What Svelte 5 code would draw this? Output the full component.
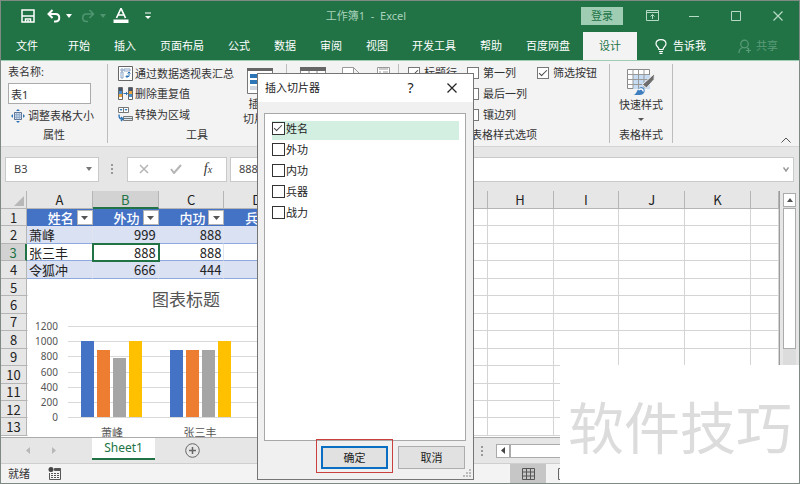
<script>
  const tabs = ['开始', '插入', '页面布局', '公式', '数据', '审阅', '视图', '开发工具', '帮助', '百度网盘'];
  const letters = ['A', 'B', 'C', 'D', 'E', 'F', 'G', 'H', 'I', 'J', 'K', ''];
  const fields = ['姓名', '外功', '内功', '兵器', '战力'];
  const data = [
    ['萧峰', 999, 888, 777, 999],
    ['张三丰', 888, 888, 888, 999],
    ['令狐冲', 666, 444, 555, 999]
  ];
  const emptyRows = [5, 6, 7, 8, 9, 10, 11, 12, 13];
  const options = [
    ['标题行', true], ['第一列', false], ['筛选按钮', true],
    ['汇总行', false], ['最后一列', false], null,
    ['镶边行', true], ['镶边列', false], null
  ];
  const colors = ['#4472c4', '#ed7d31', '#a5a5a5', '#ffc000'];
  const ticks = [1200, 1000, 800, 600, 400, 200, 0];
  const yOf = (v) => Math.round(138 - (v * 91) / 1200);
  let picked = $state([true, false, false, false, false]);
</script>

<div class="window">
  <header>
    <div class="titlebar">
      <div class="qat">
        <button class="save" aria-label="保存"><svg width="14" height="14" viewBox="0 0 14 14" fill="none" stroke="#fff" stroke-width="1.500"><path d="M1 1h12v12H1zM1.500 7h11M4.500 13V10h5v3M7 11v2"/></svg></button>
        <button class="undo" aria-label="撤销"><svg width="14" height="14" viewBox="0 0 14 14" fill="none" stroke="#fff" stroke-width="2"><path d="M5.500 1L1.500 5l4 4M2 5h6.500c5 0 5 7.500 0 7.500H7"/></svg></button>
        <button class="drop" aria-label="撤销列表"><svg width="6" height="4"><path d="M0 0h6L3 4z" fill="#fff"/></svg></button>
        <button class="redo" aria-label="恢复"><svg width="14" height="14" viewBox="0 0 14 14" fill="none" stroke="#4f9570" stroke-width="1.600"><path d="M8.500 1l4 4-4 4M12 5H5.500c-5 0-5 7.500 0 7.500H7"/></svg></button>
        <button class="drop" aria-label="恢复列表"><svg width="6" height="4"><path d="M0 0h6L3 4z" fill="#4f9570"/></svg></button>
        <button class="font" aria-label="字体颜色"><svg width="16" height="16" viewBox="0 0 16 16"><path d="M3.500 10L8 0.500 12.500 10M5 7h6" fill="none" stroke="#fff" stroke-width="1.700"/><path d="M0.500 11.500h15V15h-15z" fill="#fff"/></svg></button>
        <button class="more" aria-label="自定义快速访问工具栏"><svg width="6" height="8"><path d="M0 1h6" stroke="#fff"/><path d="M0 4h6L3 7z" fill="#fff"/></svg></button>
      </div>
      <div class="doc">工作簿1&nbsp; -&nbsp; Excel</div>
      <button class="login">登录</button>
      <div class="controls">
        <button aria-label="功能区显示选项"><svg width="13" height="11" viewBox="0 0 13 11" fill="none" stroke="#b5dac5"><path d="M.5.5h12v10H.5zM.5 2.500h12M6.500 9V4.500M4.500 6.500l2-2 2 2"/></svg></button>
        <button aria-label="最小化"><svg width="10" height="10"><path d="M0 5.500h10" stroke="#b5dac5"/></svg></button>
        <button aria-label="最大化"><svg width="10" height="10"><path d="M.5.5h9v9h-9z" fill="none" stroke="#b5dac5"/></svg></button>
        <button aria-label="关闭"><svg width="10" height="10"><path d="M.5.5l9 9M9.500.5l-9 9" stroke="#b5dac5" stroke-width="1.200"/></svg></button>
      </div>
    </div>
    <nav>
      <button class="file">文件</button>
      {#each tabs as t}<button>{t}</button>{/each}
      <button class="active">设计</button>
      <button class="tell"><svg width="12" height="15" viewBox="0 0 12 15" fill="none" stroke="#fff" stroke-width="1.200"><path d="M4 10.500C4 8 1 7.500 1 4.800 1 2.300 3.200.7 6 .7s5 1.600 5 4.100C11 7.500 8 8 8 10.500zM4 12.500h4M4.500 14.300h3"/></svg>告诉我</button>
      <button class="share"><svg width="14" height="15" viewBox="0 0 14 15" fill="none" stroke="#5b9c79" stroke-width="1.200"><circle cx="6.500" cy="5" r="3.800"/><path d="M1 14c0-3 1.500-5 4-5.500M8.500 8.500l1.500 1M10.500 9v5M8 11.500h5"/></svg>共享</button>
    </nav>
  </header>

  <section class="ribbon">
    <div class="group props">
      <div class="body">
        <label for="tname">表名称:</label>
        <input id="tname" value="表1" />
        <button><svg width="14" height="14" viewBox="0 0 14 14" fill="none" stroke="#5a6f8c"><path d="M3.500 3.500h7v7h-7z" fill="#dbe8f6"/><path d="M5.800 3.500v7M8.200 3.500v7M3.500 5.800h7M3.500 8.200h7" stroke="#8aa5c8"/><path d="M7 0l2 2H5zM7 14l2-2H5zM0 7l2-2v4zM14 7l-2-2v4z" fill="#2e75b6" stroke="none"/></svg>调整表格大小</button>
      </div>
      <h2>属性</h2>
    </div>
    <div class="group tools">
      <div class="body row">
        <div class="list">
          <button><svg width="15" height="15" viewBox="0 0 15 15" fill="none"><path d="M.5.5h14v14H.5z" fill="#fff" stroke="#666"/><path d="M3 3h2v2H3zM6 3h6v2H6zM3 6h2v6H3z" stroke="#88a3c5"/><path d="M11 6v4.500H8M9.500 9L8 10.500 9.500 12M9.500 7.500L11 6l1.500 1.500" stroke="#2e75b6"/></svg>通过数据透视表汇总</button>
          <button><svg width="15" height="13" viewBox="0 0 15 13" fill="none"><path d="M.5.5h4v12h-4zM10.500.5h4v12h-4z" fill="#fff" stroke="#666"/><path d="M1 1h3v3H1zM11 1h3v3h-3z" fill="#44546a"/><path d="M1 4h3v3H1zM11 7h3v3h-3z" fill="#4a90d0"/><path d="M1 7h3v3H1zM11 4h3v3h-3z" fill="#e8a33d"/><path d="M5.500 6.500h4M8 5l1.500 1.500L8 8" stroke="#2e75b6"/></svg>删除重复值</button>
          <button><svg width="15" height="15" viewBox="0 0 15 15" fill="none"><path d="M.5.5h10v5H.5zM5.500.5v5" fill="#fff" stroke="#777"/><path d="M1.500 2h3L3 4zM6.500 2h3L8 4z" fill="#2e75b6"/><path d="M5.500 9.500h9v4h-9zM5.500 11.500h9" fill="#dbe8f6" stroke="#777"/><path d="M1 7.500c0 4 1 4.500 3.500 4.500M3 10l2 2-2 2" stroke="#2e75b6" stroke-width="1.400"/></svg>转换为区域</button>
        </div>
        <button class="big"><svg width="26" height="26" viewBox="0 0 26 26"><path d="M.5.5h25v25H.5z" fill="#fff" stroke="#777"/><path d="M0 0h26v3H0z" fill="#666"/><path d="M3 6h20v4H3zM3 12h20v4H3z" fill="#2e75b6"/><path d="M3 18h20v4H3z" fill="#cfd6df"/></svg><span>插入<br />切片器</span></button>
      </div>
      <h2>工具</h2>
    </div>
    <div class="group ext">
      <div class="body row">
        <svg width="26" height="26" viewBox="0 0 26 26"><path d="M.5.5h25v25H.5zM9 3v23M17 3v23M0 8h26" fill="#fff" stroke="#888"/><path d="M0 0h26v4H0z" fill="#666"/></svg>
        <svg width="19" height="26" viewBox="0 0 19 26"><path d="M.5.5h11l7 7v18H.5zM11.500.5v7h7" fill="#fff" stroke="#999"/></svg>
        <svg width="13" height="15" viewBox="0 0 13 15"><path d="M.5.5h12v14H.5z" fill="#fff" stroke="#999"/><path d="M2 2h9M2 5h2M6 5h5M2 8h2M6 8h5" stroke="#999"/></svg>
      </div>
      <h2>外部表数据</h2>
    </div>
    <div class="group opts">
      <div class="body checks">
        {#each options as o}
          {#if o}<label><input type="checkbox" checked={o[1]} />{o[0]}</label>{:else}<span></span>{/if}
        {/each}
      </div>
      <h2>表格样式选项</h2>
    </div>
    <div class="group styles">
      <div class="body">
        <button class="big"><svg width="28" height="27" viewBox="0 0 28 27" fill="none"><path d="M.5.5h22v19H.5z" fill="#fff" stroke="#888"/><path d="M6 6h17v14H6z" fill="#c5dcf2"/><path d="M.5 5.500h22M.5 10.500h22M.5 15.500h22M6 .5v19M11.500.5v19M17 .5v19" stroke="#999"/><path d="M27.500 4.500l-.5 6-7.500 8.500-4-3.500z" fill="#6d6d6d" stroke="#f3f3f3"/><path d="M6 26c4.500 0 3.500-7.500 8.500-8 5 1 4 8-2 8z" fill="#3f7fbf"/><path d="M11.500 21c2-2 5-1 4.500 1.500" stroke="#fff" stroke-width="1.500"/></svg><span>快速样式</span><svg class="tri" width="6" height="4"><path d="M0 0h6L3 3z" fill="#555"/></svg></button>
      </div>
      <h2>表格样式</h2>
    </div>
    <button class="collapse" aria-label="折叠功能区"><svg width="10" height="6"><path d="M.5 5.500L5 1l4.500 4.500" fill="none" stroke="#555"/></svg></button>
  </section>

  <section class="formula">
    <div class="namebox"><input aria-label="名称框" value="B3" /><button aria-label="名称列表"><svg width="6" height="4"><path d="M0 0h6L3 4z" fill="#777"/></svg></button></div>
    <span class="grip"></span>
    <div class="fx">
      <button aria-label="取消"><svg width="10" height="10"><path d="M1 1l8 8M9 1L1 9" stroke="#b5b5b5" stroke-width="1.500"/></svg></button>
      <button aria-label="输入"><svg width="12" height="10"><path d="M1 5l3 4 7-8" fill="none" stroke="#b5b5b5" stroke-width="2"/></svg></button>
      <button aria-label="插入函数"><i>f<small>x</small></i></button>
    </div>
    <div class="value"><input aria-label="编辑栏" value="888" /><button aria-label="展开编辑栏"><svg width="6" height="5"><path d="M.5.5L3 4 5.500.5" fill="none" stroke="#999" stroke-width="1.500"/></svg></button></div>
  </section>

  <main>
    <div class="grid">
      <table>
        <colgroup><col class="rowcol" />{#each letters as l}<col class:last={!l} />{/each}</colgroup>
        <thead>
          <tr><th class="corner"><svg width="10" height="10"><path d="M10 0v10H0z" fill="#b8b8b8"/></svg></th>{#each letters as l}<th class:sel={l === 'B'}>{l}</th>{/each}</tr>
        </thead>
        <tbody>
          <tr class="fields">
            <th>1</th>
            {#each fields as f}<td><div>{f}<button aria-label="筛选{f}"><svg width="7" height="4"><path d="M0 0h7L3.500 4z" fill="#555"/></svg></button></div></td>{/each}
            {#each letters.slice(5) as l}<td class="plain"></td>{/each}
          </tr>
          {#each data as row, r}
            <tr class:band={r !== 1}>
              <th class:sel={r === 1}>{r + 2}</th>
              {#each row as v, c}<td class="cell" class:num={c > 0} class:cursor={r === 1 && c === 1}>{v}</td>{/each}
              {#each letters.slice(5) as l}<td class="plain"></td>{/each}
            </tr>
          {/each}
          {#each emptyRows as n}
            <tr><th>{n}</th>{#each letters as l}<td class="plain"></td>{/each}</tr>
          {/each}
        </tbody>
      </table>
      <svg class="chart" width="400" height="158" viewBox="0 0 400 158">
        <rect width="400" height="158" fill="#fff" />
        <text class="ctitle" x="158" y="27" text-anchor="middle">图表标题</text>
        {#each ticks as t}
          <path d="M40 {yOf(t) + 0.5}H380" stroke="#d9d9d9" />
          <text x="30" y={yOf(t) + 4} text-anchor="end">{t}</text>
        {/each}
        {#each data as row, g}
          {#each row.slice(1) as v, i}
            <rect x={53 + g * 89 + i * 16} y={yOf(v)} width="13" height={138 - yOf(v)} fill={colors[i]} />
          {/each}
          <text class="cat" x={84 + g * 88} y="158" text-anchor="middle">{row[0]}</text>
        {/each}
      </svg>
    </div>
    <div class="vscroll">
      <button aria-label="向上滚动"><svg width="6" height="4"><path d="M0 4h6L3 0z" fill="#555"/></svg></button>
      <div class="thumb"></div>
    </div>
  </main>

  <section class="sheets">
    <div class="arrows"><svg width="4" height="7"><path d="M4 0v7L0 3.500z" fill="#b8b8b8"/></svg><svg width="4" height="7"><path d="M0 0v7l4-3.500z" fill="#b8b8b8"/></svg></div>
    <button class="sheet">Sheet1</button>
    <button class="add" aria-label="新工作表"><svg width="15" height="15" viewBox="0 0 15 15" fill="none" stroke="#666"><circle cx="7.500" cy="7.500" r="6.800"/><path d="M7.500 4v7M4 7.500h7" stroke-width="1.500"/></svg></button>
    <div class="hscroll"><span class="grip"></span><button aria-label="向左滚动"><svg width="4" height="7"><path d="M4 0v7L0 3.500z" fill="#444"/></svg></button><div class="bar"></div></div>
  </section>

  <footer>
    <span>就绪</span>
    <svg width="13" height="13" viewBox="0 0 13 13"><circle cx="3" cy="2.500" r="2.500" fill="#444"/><path d="M6.500 1.500h6v2h-6z" fill="#555" stroke="#555"/><path d="M1.500 6v6.500h11V3.500" fill="none" stroke="#555"/><path d="M3 6.500h8M3 8.500h8M3 10.500h8" stroke="#555" stroke-dasharray="2 1"/></svg>
    <div class="views">
      <button class="on" aria-label="普通"><svg width="13" height="12" viewBox="0 0 13 12"><path d="M.5.5h12v11H.5zM4.500.5v11M8.500.5v11M.5 4h12M.5 8h12" fill="none" stroke="#555"/></svg></button>
      <button aria-label="页面布局"><svg width="13" height="12"><path d="M.5.5h12v11H.5zM3.500 3h6v6h-6z" fill="none" stroke="#666"/></svg></button>
    </div>
  </footer>

  <div class="dialog" role="dialog" aria-label="插入切片器">
    <div class="dtitle">
      <span>插入切片器</span>
      <button aria-label="帮助">?</button>
      <button aria-label="关闭"><svg width="10" height="10"><path d="M.5.5l9 9M9.500.5l-9 9" stroke="#222" stroke-width="1.200"/></svg></button>
    </div>
    <div class="choices">
      {#each fields as f, i}
        <label class:on={i === 0}><input type="checkbox" bind:checked={picked[i]} />{f}</label>
      {/each}
    </div>
    <div class="actions">
      <div class="mark"><button class="ok">确定</button></div>
      <button>取消</button>
    </div>
    <svg class="size" width="8" height="8"><path d="M6 0h2v2H6zM3 3h2v2H3zM6 3h2v2H6zM0 6h2v2H0zM3 6h2v2H3zM6 6h2v2H6z" fill="#bbb"/></svg>
  </div>

  <div class="stamp">软件技巧</div>
</div>

<style>
  :global(body) { margin: 0; }
  * { box-sizing: border-box; }
  .window { position: relative; display: flex; flex-direction: column; min-height: 100vh; overflow: hidden; border: 1px solid #7f8a84; background: #e6e6e6; color: #333; font: 11px/16px "Noto Sans", "Noto Sans CJK SC", sans-serif; }
  button { display: flex; align-items: center; justify-content: center; padding: 0; border: 0; background: none; color: inherit; font: inherit; white-space: nowrap; }
  input { font: inherit; color: inherit; min-width: 0; }
  svg { display: block; flex: none; }

  header { background: #217346; color: #fff; border-bottom: 1px solid #9fcdb3; }
  .titlebar { display: flex; align-items: center; height: 31px; padding: 0 0 2px 20px; }
  .qat { display: flex; align-items: center; }
  .undo { margin-left: 12px; }
  .drop { margin-left: 5px; }
  .redo { margin-left: 9px; }
  .font { margin-left: 7px; }
  .more { margin-left: 16px; }
  .doc { flex: 1; text-align: center; color: #a9d2bb; }
  .login { width: 42px; height: 18px; background: #9fcdb3; color: #217346; }
  .controls { display: flex; margin-left: 8px; }
  .controls button { width: 42px; height: 28px; }
  nav { display: flex; height: 28px; padding-left: 3px; }
  nav button { padding: 0 12px; }
  nav .file { padding-right: 18px; }
  nav .active { padding: 0 16px; margin-left: 1px; background: #f3f3f3; color: #217346; }
  nav .tell { gap: 6px; padding: 0 18px; }
  nav .share { gap: 4px; margin-left: auto; padding: 0 21px 0 0; color: #5b9c79; }

  .ribbon { display: flex; height: 86px; padding: 3px 0; background: #f3f3f3; border-bottom: 1px solid #d5d5d5; }
  .group { display: flex; flex-direction: column; height: 79px; border-right: 1px solid #bcbcbc; }
  .body { height: 65px; }
  .row { display: flex; align-items: flex-start; }
  h2 { margin: 0; font-size: 11px; line-height: 16px; font-weight: 400; text-align: center; }
  .props { width: 107px; }
  .props .body { padding-left: 7px; }
  .props label { display: block; }
  .props input { display: block; width: 83px; height: 21px; margin: 3px 0 2px; padding: 0 2px; border: 1px solid #ababab; background: #fff; }
  .props button { gap: 3px; height: 20px; padding-left: 3px; }
  .tools { width: 179px; }
  .tools .body { padding-left: 10px; gap: 9px; }
  .list button { gap: 2px; height: 21px; }
  .list button:first-child { height: 19px; }
  .big { flex-direction: column; }
  .tools .big { gap: 2px; margin-top: 4px; line-height: 15px; }
  .ext { width: 112px; }
  .ext .body { gap: 16px; padding: 3px 0 0 13px; }
  .opts { width: 211px; }
  .checks { display: grid; grid-template: repeat(3, 21px) / 59px 70px auto; padding-left: 9px; margin-top: -2px; margin-bottom: 2px; justify-content: start; }
  .checks label { display: flex; align-items: center; gap: 4px; white-space: nowrap; }
  input[type="checkbox"] { appearance: none; flex: none; width: 12px; height: 12px; margin: 0; border: 1px solid #777; background: #fff; }
  input[type="checkbox"]:checked::after { content: ""; display: block; width: 7px; height: 3px; margin: 2px 0 0 1px; border: solid #444; border-width: 0 0 1px 1px; transform: rotate(-45deg); }
  .styles { width: 63px; }
  .styles .big { width: 100%; padding-top: 5px; gap: 1px; }
  .styles .tri { margin-top: 4px; }
  .collapse { align-self: flex-end; margin: 0 8px 0 auto; }

  .formula { display: flex; align-items: center; height: 44px; padding: 0 5px 0 4px; }
  .namebox, .fx, .value { display: flex; align-items: center; height: 25px; border: 1px solid #c9c9c9; background: #fff; }
  .formula input { flex: 1; border: 0; padding: 0 8px; background: none; color: #444; }
  .namebox { width: 94px; padding-right: 6px; }
  .grip { width: 2px; height: 10px; margin: 0 14px 0 12px; border-left: 2px dotted #999; }
  .fx { width: 100px; padding-left: 9px; gap: 18px; }
  .fx button { width: 14px; }
  .fx i { font: italic 14px/16px "Liberation Serif", serif; color: #333; }
  .fx small { font-size: 10px; }
  .value { flex: 1; margin-left: 3px; padding-right: 4px; }

  main { flex: 1; display: flex; min-height: 246px; }
  .grid { position: relative; flex: 1; overflow: hidden; background: linear-gradient(#e6e6e6 18px, #fff 18px); border-right: 1px solid #9c9c9c; height: 246px; }
  table { table-layout: fixed; width: 100%; height: 245px; border-spacing: 0; font: 13px/15px "Noto Sans CJK SC", sans-serif; color: #222; }
  .rowcol { width: 26px; }
  .last { width: 28px; }
  th, td { padding: 0; overflow: hidden; white-space: nowrap; }
  th { font-weight: 400; background: #e6e6e6; border-right: 1px solid #b5b5b5; border-bottom: 1px solid #b5b5b5; text-align: center; }
  thead tr { height: 18px; }
  th.sel { background: #d2d2d2; color: #217346; }
  thead th.sel { border-bottom: 2px solid #217346; }
  tbody th.sel { border-right: 2px solid #217346; }
  .corner svg { margin: 2px 2px 0 auto; }
  .plain { border-right: 1px solid #d4d4d4; border-bottom: 1px solid #d4d4d4; }
  .fields td:not(.plain) { background: #4472c4; color: #fff; font-weight: 500; }
  .fields div { display: flex; align-items: center; justify-content: flex-end; gap: 3px; height: 16px; }
  .fields div button { width: 16px; height: 15px; background: #fff; border: 1px solid #b5b5b5; }
  .cell { padding: 0 2px; border-bottom: 1px solid #8ea9db; border-right: 1px solid #e0e4ee; }
  .band .cell { background: #d9e1f2; }
  .num { text-align: right; }
  .cursor { outline: 2px solid #217346; outline-offset: -1px; }
  .chart { position: absolute; left: 27px; top: 88px; font-size: 10px; fill: #555; }
  .chart .ctitle { font-size: 17px; }
  .chart .cat { font-size: 11px; }
  .vscroll { display: flex; flex-direction: column; gap: 1px; width: 13px; margin: 2px 3px 0 3px; background: #dcdcdc; }
  .vscroll button, .thumb { border: 1px solid #ababab; background: #fff; }
  .vscroll button { height: 14px; }
  .thumb { height: 141px; }

  .sheets { display: flex; height: 27px; border-top: 1px solid #ababab; border-bottom: 1px solid #cfcfcf; }
  .arrows { display: flex; align-items: center; gap: 22px; width: 91px; padding-left: 25px; }
  .sheet { width: 63px; height: 22px; background: #fff; border-bottom: 2px solid #217346; color: #217346; font-size: 12px; }
  .add { margin-left: 30px; }
  .hscroll { display: flex; align-items: center; width: 40%; margin-left: auto; }
  .hscroll .grip { margin: 0 13px 0 1px; }
  .hscroll button { width: 14px; height: 14px; background: #fff; border: 1px solid #ababab; }
  .bar { flex: 1; height: 14px; background: #fff; border: 1px solid #ababab; }
  footer { display: flex; align-items: center; gap: 18px; height: 19px; padding-left: 7px; background: #f3f3f3; }
  .views { display: flex; width: 289px; height: 19px; margin-left: auto; }
  .views button { width: 36px; }
  .views .on { background: #c6c6c6; }

  .dialog { position: absolute; left: 256px; top: 72px; width: 217px; border: 1px solid #757575; background: #f0f0f0; color: #222; }
  .dtitle { display: flex; align-items: center; height: 28px; padding: 0 1px 0 7px; background: #fff; }
  .dtitle span { flex: 1; }
  .dtitle button { width: 41px; height: 26px; font-size: 14px; }
  .choices { height: 328px; margin: 11px 7px 0 6px; padding: 7px 6px 7px 7px; border: 1px solid #a8a8a8; background: #fff; }
  .choices label { display: flex; align-items: center; gap: 1px; height: 19px; margin-bottom: 2px; padding-bottom: 4px; }
  .choices .on { background: #d3efe1; }
  .choices input { border-color: #333; width: 13px; height: 13px; }
  .actions { position: relative; display: flex; justify-content: flex-end; margin: -2px 8px 6px; gap: 5px; }
  .actions button { width: 67px; height: 23px; border: 1px solid #adadad; background: #e1e1e1; }
  .mark { padding: 6px 4px 3px; border: 1px solid #c9403c; }
  .actions .ok { border: 2px solid #0a6fc2; }
  .actions > button { margin-top: 7px; }
  .size { position: absolute; right: 2px; bottom: 2px; }

  .stamp { position: absolute; right: -1px; bottom: -1px; width: 240px; height: 119px; background: #fff; color: #dcdcdc; font: 56px/119px "Noto Sans CJK SC", sans-serif; text-align: center; }
</style>
